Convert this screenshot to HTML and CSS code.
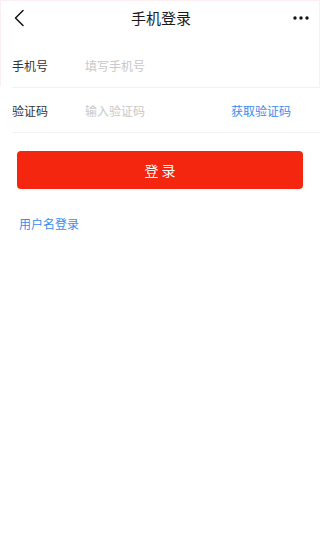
FILE: index.html
```html
<!DOCTYPE html>
<html lang="zh-CN">
<head>
<meta charset="utf-8">
<meta name="viewport" content="width=device-width, initial-scale=1">
<title>手机登录</title>
<link rel="stylesheet" href="styles.css">
</head>
<body>
<div class="page">
  <header class="nav">
    <span class="nav-back">
      <svg width="12" height="18" viewBox="0 0 12 18"><path d="M10 1.5 L2.5 9 L10 16.5" fill="none" stroke="#111" stroke-width="1.5" stroke-linecap="round" stroke-linejoin="round"/></svg>
    </span>
    <h1 class="nav-title">手机登录</h1>
    <span class="nav-more">
      <svg width="16" height="4" viewBox="0 0 16 4"><circle cx="2" cy="2" r="1.7" fill="#111"/><circle cx="8" cy="2" r="1.7" fill="#111"/><circle cx="14" cy="2" r="1.7" fill="#111"/></svg>
    </span>
  </header>
  <div class="form">
    <div class="row">
      <span class="label">手机号</span>
      <span class="placeholder">填写手机号</span>
    </div>
    <div class="row">
      <span class="label">验证码</span>
      <span class="placeholder">输入验证码</span>
      <span class="get-code">获取验证码</span>
    </div>
  </div>
  <button class="login-btn">登 录</button>
  <a class="alt-link">用户名登录</a>
</div>
</body>
</html>
```

FILE: styles.css
```css
html, body {
  margin: 0;
  padding: 0;
  background: #fff;
}
body {
  font-family: "Noto Sans CJK SC", "Noto Sans", sans-serif;
  color: #333;
}
.page {
  position: relative;
  width: 320px;
  height: 547px;
  display: flex;
  flex-direction: column;
}
.page::before {
  content: "";
  position: absolute;
  left: 0;
  top: 0;
  right: 0;
  height: 86px;
  border: 1px solid #fdeef2;
  border-bottom: none;
  box-sizing: border-box;
  pointer-events: none;
}
.nav {
  height: 36px;
  display: flex;
  align-items: center;
  justify-content: space-between;
  padding: 0 11px 0 13px;
}
.nav-back {
  display: flex;
  width: 30px;
}
.nav-more {
  display: flex;
  width: 30px;
  justify-content: flex-end;
}
.nav-title {
  margin: 0;
  font-size: 15px;
  font-weight: normal;
  color: #1a1a1a;
  line-height: 20px;
}
.form {
  padding-top: 8px;
}
.row {
  margin-left: 12px;
  height: 44px;
  display: flex;
  align-items: center;
  border-bottom: 1px solid #f2f2f2;
  box-sizing: border-box;
  font-size: 12px;
  padding-right: 29px;
}
.row + .row {
  height: 45px;
}
.label {
  width: 73px;
  color: #333;
}
.placeholder {
  flex: 1;
  color: #c8c8c8;
}
.get-code {
  color: #3a8cef;
}
.login-btn {
  margin: 18px 17px 0;
  height: 38px;
  border: none;
  border-radius: 4px;
  background: #f5260f;
  color: #fff;
  font-family: inherit;
  font-size: 14px;
  letter-spacing: 0;
  padding: 0;
}
.alt-link {
  margin: 26px 0 0 19px;
  font-size: 12px;
  line-height: 17px;
  color: #3a8cef;
  align-self: flex-start;
}
```
